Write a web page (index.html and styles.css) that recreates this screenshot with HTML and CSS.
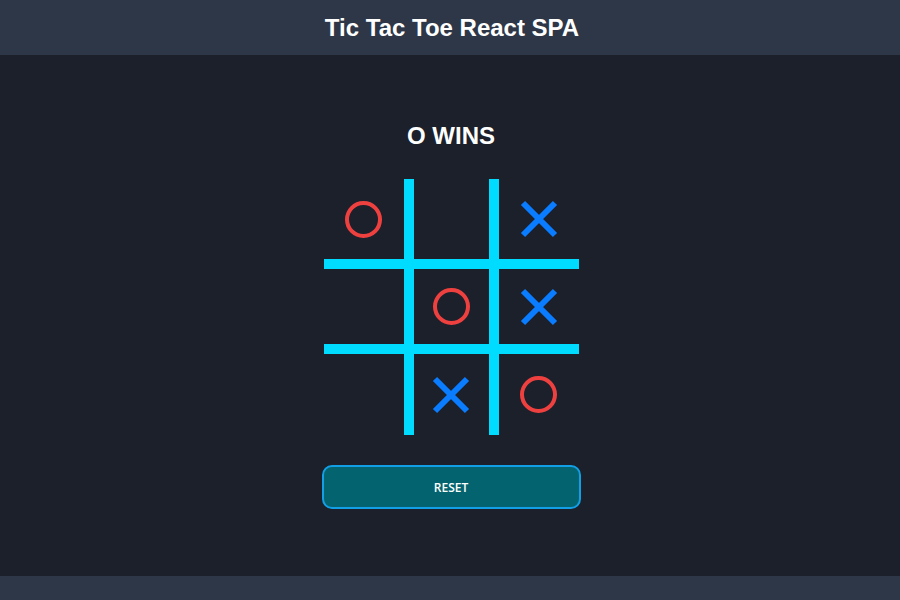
FILE: index.html
```html
<!DOCTYPE html>
<html>
<head>
<meta charset="utf-8">
<title>Tic Tac Toe React SPA</title>
<link rel="stylesheet" href="styles.css">
</head>
<body>
<div class="app">
  <header class="header"><h1 class="header-title">Tic Tac Toe React SPA</h1></header>
  <main class="main">
    <h2 class="status">O WINS</h2>
    <div class="board">
      <div class="cell c-r c-b"><span class="mark-o"></span></div>
      <div class="cell c-l c-r c-b"></div>
      <div class="cell c-l c-b"><svg class="mark-x" viewBox="0 0 38 38"><path d="M3 3L35 35M35 3L3 35"/></svg></div>
      <div class="cell c-r c-t c-b"></div>
      <div class="cell c-l c-r c-t c-b"><span class="mark-o"></span></div>
      <div class="cell c-l c-t c-b"><svg class="mark-x" viewBox="0 0 38 38"><path d="M3 3L35 35M35 3L3 35"/></svg></div>
      <div class="cell c-r c-t"></div>
      <div class="cell c-l c-r c-t"><svg class="mark-x" viewBox="0 0 38 38"><path d="M3 3L35 35M35 3L3 35"/></svg></div>
      <div class="cell c-l c-t"><span class="mark-o"></span></div>
    </div>
    <button class="reset">RESET</button>
  </main>
  <footer class="footer"></footer>
</div>
</body>
</html>
```
FILE: styles.css
```css
* { box-sizing: border-box; }
html, body { margin: 0; padding: 0; }
body {
  background: #1b202b;
  font-family: "Liberation Sans", Arial, sans-serif;
  color: #fff;
}
.app {
  display: flex;
  flex-direction: column;
  height: 100vh;
}
.header {
  height: 55px;
  background: #2d3748;
  display: flex;
  align-items: center;
  justify-content: center;
}
.header-title {
  margin: 0;
  font-size: 24px;
  font-weight: bold;
  line-height: 26px;
  margin-left: 4px;
}
.main {
  flex: 1;
  display: flex;
  flex-direction: column;
  align-items: center;
  padding-top: 68px;
}
.status {
  margin: 0;
  font-size: 24px;
  font-weight: bold;
  line-height: 26px;
  margin-left: 2px;
}
.board {
  margin-top: 30px;
  display: grid;
  grid-template-columns: repeat(3, 85px);
  grid-template-rows: 85px 85px 86px;
  margin-left: 2px;
}
.cell {
  display: flex;
  align-items: center;
  justify-content: center;
  border: 0 solid #00dcff;
}
.c-l { border-left-width: 5px; }
.c-r { border-right-width: 5px; }
.c-t { border-top-width: 5px; }
.c-b { border-bottom-width: 5px; }
.mark-o {
  width: 37px;
  height: 37px;
  border: 4px solid #ef4040;
  border-radius: 50%;
}
.mark-x {
  width: 38px;
  height: 38px;
}
.mark-x path {
  stroke: #0a7cff;
  stroke-width: 6;
  fill: none;
}
.reset {
  margin-top: 30px;
  width: 259px;
  height: 44px;
  background: #03646f;
  border: 2px solid #129fe6;
  border-radius: 10px;
  color: #fff;
  font-family: "Open Sans", sans-serif;
  font-weight: 600;
  font-size: 12px;
  margin-left: 2px;
}
.footer {
  height: 24px;
  background: #2d3748;
}
```
